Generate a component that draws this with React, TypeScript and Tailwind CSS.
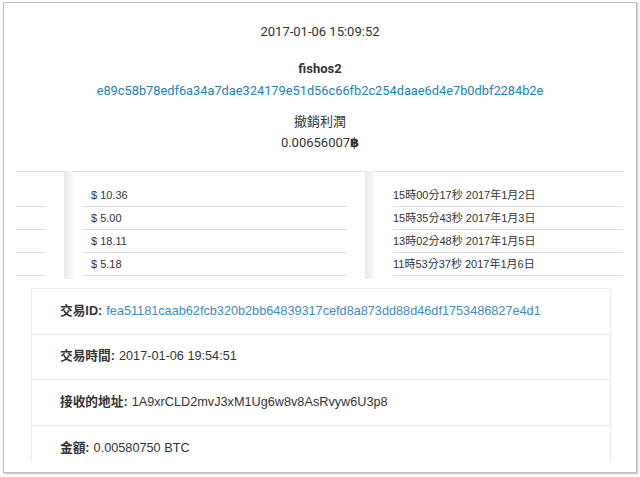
import React from 'react'

const amounts = ['$ 10.36', '$ 5.00', '$ 18.11', '$ 5.18']
const times = ['15時00分17秒 2017年1月2日', '15時35分43秒 2017年1月3日', '13時02分48秒 2017年1月5日', '11時53分37秒 2017年1月6日']

const details: { label: string; value: string; h: string; link?: boolean }[] = [
    { label: '交易ID:', value: 'fea51181caab62fcb320b2bb64839317cefd8a873dd88d46df1753486827e4d1', h: 'h-[46px]', link: true },
    { label: '交易時間:', value: '2017-01-06 19:54:51', h: 'h-[45px]' },
    { label: '接收的地址:', value: '1A9xrCLD2mvJ3xM1Ug6w8v8AsRvyw6U3p8', h: 'h-[46px]' },
    { label: '金額:', value: '0.00580750 BTC', h: 'h-[46px]' },
]

const sans = { fontFamily: '"Liberation Sans", "Noto Sans CJK TC", sans-serif' }

const Strip = () => <div className="w-[9px] shrink-0 bg-gradient-to-r from-[#e9e9e9] via-[#f1f1f1] to-[#f8f8f8]" />

export default function App() {
    return (
        <div className="h-[477px] w-[640px] overflow-hidden bg-white pl-[3px] pt-[2px]">
            <div className="flex h-[471px] w-[634px] flex-col overflow-hidden border border-[#bdbdbd] bg-white shadow-[1px_1px_2px_rgba(0,0,0,0.25)]">
                <div className="flex flex-col items-center text-[13px] leading-[18px] text-[#333]" style={{ fontFamily: 'Roboto, "Noto Sans CJK TC", "DejaVu Sans", sans-serif' }}>
                    <div className="mt-[20px]">2017-01-06 15:09:52</div>
                    <div className="mt-[19px] font-bold">fishos2</div>
                    <div className="mt-[4px] text-[12.8px] text-[#2182b8]">e89c58b78edf6a34a7dae324179e51d56c66fb2c254daae6d4e7b0dbf2284b2e</div>
                    <div className="mt-[13px]">撤銷利潤</div>
                    <div className="mt-[3px]">
                        0.00656007<span className="font-bold">฿</span>
                    </div>
                </div>

                <div className="mt-[19px] flex h-[108px] px-[12px] text-[11px] text-[#333]" style={sans}>
                    <div className="w-[48px] shrink-0 border-t border-[#dddddd] pr-[18px] pt-[12px]">
                        {amounts.map((_, i) => (
                            <div key={i} className="h-[23px] border-b border-[#dddddd]" />
                        ))}
                    </div>
                    <Strip />
                    <div className="w-[292px] shrink-0 border-t border-[#dddddd] pl-[9px] pr-[18px] pt-[12px]">
                        {amounts.map((a) => (
                            <div key={a} className="flex h-[23px] items-center border-b border-[#dddddd] pl-[9px]">
                                {a}
                            </div>
                        ))}
                    </div>
                    <Strip />
                    <div className="flex-1 border-t border-[#dddddd] pl-[19px] pr-[1px] pt-[12px]">
                        {times.map((t) => (
                            <div key={t} className="flex h-[23px] items-center border-b border-[#dddddd]">
                                {t}
                            </div>
                        ))}
                    </div>
                </div>

                <div className="ml-[27px] mt-[9px] h-[174px] w-[580px] overflow-hidden border-x border-t border-[#eeeeee] text-[12.7px] text-[#333]" style={sans}>
                    {details.map((d) => (
                        <div key={d.label} className={`flex items-center border-b border-[#e6e6e6] pl-[28px] ${d.h}`}>
                            <span className="font-bold">{d.label}</span>
                            <span className={`ml-[4px] ${d.link ? 'text-[#3a8dc4]' : ''}`}>{d.value}</span>
                        </div>
                    ))}
                </div>
            </div>
        </div>
    )
}
